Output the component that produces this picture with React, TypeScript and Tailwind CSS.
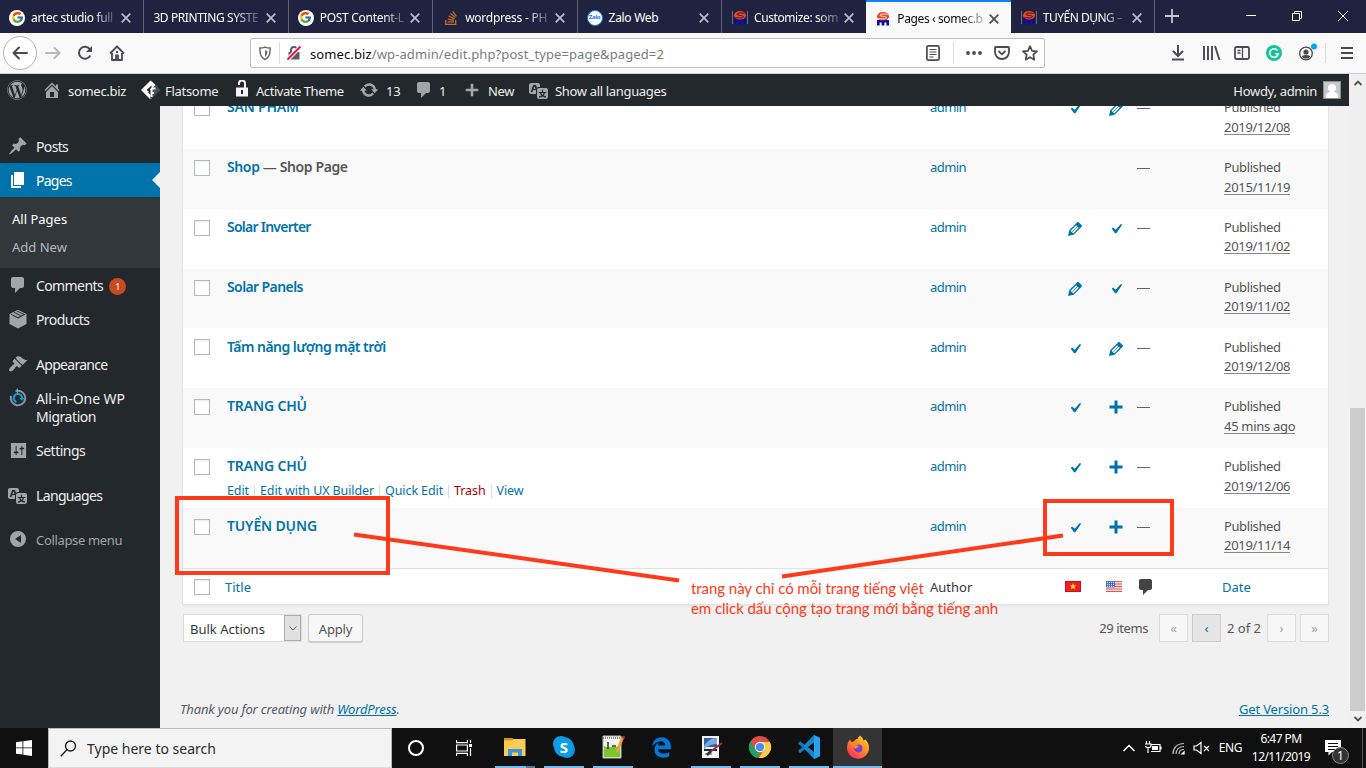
import React from "react";
import { FcGoogle } from "react-icons/fc";
import { FaWordpress, FaStackOverflow, FaEdgeLegacy } from "react-icons/fa6";

const D = {
  comment: "M5 2h9c1.1 0 2 .9 2 2v7c0 1.1-.9 2-2 2h-2l-5 5v-5H5c-1.1 0-2-.9-2-2V4c0-1.1.9-2 2-2z",
  post: "M10.44 3.02l1.82-1.82 6.36 6.35-1.83 1.82c-1.05-.68-2.48-.57-3.41.36l-.75.75c-.92.93-1.04 2.35-.35 3.41l-1.83 1.82-2.41-2.41-2.8 2.79c-.42.42-3.38 2.71-3.8 2.29s1.86-3.39 2.28-3.81l2.79-2.79L4.1 9.36l1.83-1.82c1.05.69 2.48.57 3.4-.36l.75-.75c.93-.92 1.05-2.35.36-3.41z",
  page: "M6 15V2h10v13H6zm-1 1h8v2H3V5h2v11z",
  appearance:
    "M14.48 11.06L7.41 3.99l1.5-1.5c.5-.56 2.3-.47 3.51.32 1.21.8 1.43 1.28 2.91 2.1 1.18.64 2.45 1.26 4.45.85zm-.71.71L6.7 4.7 4.93 6.47c-.39.39-.39 1.02 0 1.41l1.06 1.06c.39.39.39 1.03 0 1.42-.6.6-1.43 1.11-2.21 1.69-.35.26-.7.53-1.01.84C1.43 14.23.4 16.08 1.4 17.07c.99 1 2.84-.03 4.18-1.36.31-.31.58-.66.85-1.02.57-.78 1.08-1.61 1.69-2.21.39-.39 1.02-.39 1.41 0l1.06 1.06c.39.39 1.02.39 1.41 0z",
  settings:
    "M18 18V2H2v16h16zM8 11h1c.55 0 1 .45 1 1s-.45 1-1 1H8v1.5c0 .28-.22.5-.5.5s-.5-.22-.5-.5V13H6c-.55 0-1-.45-1-1s.45-1 1-1h1V5.5c0-.28.22-.5.5-.5s.5.22.5.5V11zm5-2h-1c-.55 0-1-.45-1-1s.45-1 1-1h1V5.5c0-.28.22-.5.5-.5s.5.22.5.5V7h1c.55 0 1 .45 1 1s-.45 1-1 1h-1v5.5c0 .28-.22.5-.5.5s-.5-.22-.5-.5V9z",
  home: "M16 8.5l1.53 1.53-1.06 1.06L10 4.6l-6.47 6.49-1.06-1.06L10 2.5l4 4v-2h2v4zm-6-2.46l6 5.99V18H4v-5.97zM12 17v-5H8v5h4z",
  update:
    "M10.2 3.28c3.53 0 6.43 2.61 6.92 6h2.08l-3.5 4-3.5-4h2.32c-.45-1.97-2.21-3.45-4.32-3.45-1.45 0-2.73.71-3.54 1.78L4.95 5.66C6.23 4.2 8.11 3.28 10.2 3.28zm-.4 13.44c-3.52 0-6.43-2.61-6.92-6H.8l3.5-4c1.17 1.33 2.33 2.67 3.5 4H5.48c.45 1.97 2.21 3.45 4.32 3.45 1.45 0 2.73-.71 3.54-1.78l1.71 1.95c-1.28 1.46-3.15 2.38-5.25 2.38z",
  plus: "M17 8.5v3h-5.5V17h-3v-5.5H3v-3h5.5V3h3v5.5z",
  translation:
    "M11 7H9.49c-.63 0-1.25.3-1.59.7L7 5H4.13l-2.39 7h1.69l.74-2H7v4H2c-1.1 0-2-.9-2-2V5c0-1.1.9-2 2-2h7c1.1 0 2 .9 2 2v2zM6.51 9H4.49l1-2.93zM10 8h7c1.1 0 2 .9 2 2v7c0 1.1-.9 2-2 2h-7c-1.1 0-2-.9-2-2v-7c0-1.1.9-2 2-2zm7.25 5v-1.08h-3.17V9.75h-1.16v2.17H9.75V13h1.28c.11.85.56 1.85 1.28 2.62-.87.36-1.89.62-2.31.62-.01.02.22.97.2 1.46.84 0 2.21-.5 3.28-1.15 1.09.65 2.48 1.15 3.34 1.15-.02-.49.2-1.44.2-1.46-.43 0-1.49-.27-2.38-.63.7-.77 1.14-1.77 1.25-2.61h1.36zm-3.81 1.93c-.5-.46-.85-1.13-1.01-1.93h2.09c-.17.8-.51 1.47-1 1.93l-.04.03s-.03-.02-.04-.03z",
  yes: "M14.83 4.89l1.34.94-5.81 8.38H9.02L5.78 9.67l1.34-1.25 2.57 2.4z",
  edit: "M13.89 3.39l2.71 2.72c.46.46.42 1.24.03 1.64l-8.01 8.02-5.56 1.16 1.16-5.58s7.6-7.63 7.99-8.03c.39-.39 1.22-.39 1.68.07zm-2.73 2.79l-5.59 5.61 1.11 1.11 5.54-5.65zm-2.97 8.23l5.58-5.6-1.07-1.08-5.59 5.6z",
  collapse: "M10 2a8 8 0 1 1 0 16 8 8 0 0 1 0-16zM13 14V6l-6 4z",
  products: "M10 .8L18.5 5v10L10 19.5 1.5 15V5zM2.6 5.6L10 9.4l7.4-3.8-.5-.8L10 8.3 3.1 4.8zM5.6 3.6l6.6 3.4.9-.5-6.6-3.4zM8.6 2.2l6.6 3.3.8-.5L9.500 1.700z",
};

function Dash({ d, className = "size-5" }: { d: string; className?: string }) {
  return (
    <svg viewBox="0 0 20 20" className={`shrink-0 ${className}`} fill="currentColor" fillRule="evenodd">
      <path d={d} />
    </svg>
  );
}

function Google() {
  return (
    <span className="grid size-4 shrink-0 place-items-center rounded-full bg-white">
      <FcGoogle className="size-[13px]" />
    </span>
  );
}

function Somec({ active }: { active?: boolean }) {
  return (
    <svg viewBox="0 0 16 16" className="size-4 shrink-0" fill="none">
      {!active && <path d="M.5 1v13M15.500 1v13" stroke="#8d8d9c" strokeWidth=".7" />}
      <path d="M2 14.500V9h12v5.500h-2.600V11.500H9.400v3H6.600v-3H4.600v3z" fill="#0b0b9c" />
      <ellipse cx="8" cy="5.300" rx="6" ry="4.300" fill="#f4431c" />
      <path d="M12.500 3.600C9.500 2.600 5 2.900 5 4.300c0 1.300 6.500.8 6.500 2.400 0 1.500-5 1.500-8 .8" stroke={active ? "#f9f9fa" : "#202340"} strokeWidth="1" />
    </svg>
  );
}

const tabs = [
  { icon: <Google />, text: "artec studio full", pad: "pl-[9px]", track: "tracking-[-0.35px]" },
  { icon: null, text: "3D PRINTING SYSTE", pad: "pl-[9px]", track: "tracking-[-0.4px]" },
  { icon: <Google />, text: "POST Content-L", pad: "pl-[9px]", track: "tracking-[-0.3px]" },
  { icon: <FaStackOverflow className="size-4 shrink-0 text-[#c96a2c]" />, text: "wordpress - PH", pad: "pl-[10px]", track: "tracking-[-0.25px]" },
  {
    icon: (
      <span className="grid size-4 shrink-0 place-items-center rounded-full border border-[#1477f8] bg-white text-[6px] font-bold tracking-[-0.3px] text-[#1477f8]">Zalo</span>
    ),
    text: "Zalo Web",
    pad: "pl-[9px]",
    track: "tracking-[-0.3px]",
  },
  { icon: <Somec />, text: "Customize: som", pad: "pl-[10px]", track: "tracking-[-0.4px]" },
  { icon: <Somec active />, text: "Pages ‹ somec.b", pad: "pl-[9px]", track: "tracking-[-0.4px]", active: true },
  { icon: <Somec />, text: "TUYỂN DỤNG –", pad: "pl-[10px]", track: "tracking-[-0.5px]" },
];

function TabBar() {
  return (
    <div className="flex h-[33px] shrink-0 bg-[#202340] text-white">
      {tabs.map((t, i) => (
        <div
          key={i}
          className={`flex h-[33px] w-[144.4px] shrink-0 items-center ${t.pad} pt-[2px] text-[12px] ${
            t.active ? "border-t-2 border-[#0a84ff] bg-[#f9f9fa] pt-0 text-[#0c0c0d]" : i === 5 ? "" : "border-r border-[#62647a]"
          }`}
        >
          {t.icon}
          <span
            className={`${t.icon ? "ml-[6px]" : ""} whitespace-nowrap ${
              i === 4 ? "" : "[mask-image:linear-gradient(to_right,black_75%,rgba(0,0,0,0.25)_100%)]"
            } ${t.track}`}
          >
            {t.text}
          </span>
          <svg viewBox="0 0 10 10" className="ml-auto mr-[12px] size-[10px] shrink-0" stroke={t.active ? "#4a4a4f" : "#bcbdc8"} strokeWidth="1.7">
            <path d="M.7.7l8.600 8.600M9.300.7L.7 9.300" />
          </svg>
        </div>
      ))}
      <svg viewBox="0 0 14 14" className="ml-[10px] mt-[9px] size-[14px]" stroke="#c5c6d0" strokeWidth="1.8">
        <path d="M7 0v14M0 7h14" />
      </svg>
      <svg viewBox="0 0 120 12" className="ml-auto mr-[7px] mt-[10px] h-3 w-[120px]" fill="none" stroke="#fff">
        <path d="M7 5.500h10M53.500 3.500h7v7h-7zM55.500 3.500v-2h7v7h-2M99 1l10 10M109 1L99 11" />
      </svg>
    </div>
  );
}

function Toolbar() {
  return (
    <div className="flex h-[41px] shrink-0 items-center border-b border-[#cfcfd1] bg-[#f9f9fa] text-[#4a4a4f]">
      <span className="ml-[3px] grid size-[34px] place-items-center rounded-full border border-[#b5b5b7] bg-white">
        <svg viewBox="0 0 16 16" className="size-4" fill="none" stroke="currentColor" strokeWidth="2" strokeLinecap="round" strokeLinejoin="round">
          <path d="M15 8H1.500M7 2.500L1.500 8 7 13.500" />
        </svg>
      </span>
      <svg viewBox="0 0 16 16" className="ml-2 size-4" fill="none" stroke="#b9b9bb" strokeWidth="2" strokeLinecap="round" strokeLinejoin="round">
        <path d="M1 8h13.500M9.500 3l5 5-5 5" />
      </svg>
      <svg viewBox="0 0 16 16" className="ml-4 size-4" fill="none" stroke="currentColor" strokeWidth="2">
        <path d="M13.300 10.500A6 6 0 1 1 13 4.500" />
        <path d="M15 1v6H9z" fill="currentColor" stroke="none" />
      </svg>
      <svg viewBox="0 0 16 16" className="ml-4 size-4" fill="none" stroke="currentColor" strokeWidth="1.8" strokeLinejoin="round">
        <path d="M1 8.500L8 1.500l7 7M3 8v7h10V8" />
        <path d="M7 15v-4.500h2V15M7 7h2" />
      </svg>
      <div className="ml-[125px] flex h-[30px] w-[795px] items-center rounded-[2px] border border-[#bebec0] bg-white">
        <svg viewBox="0 0 14 16" className="ml-[7px] h-[15px] w-[14px]" fill="none" stroke="#6a6a6e" strokeWidth="1.600">
          <path d="M7 1.200c2 .8 4 1 5.500 1C12.500 8 12 12 7 14.500 2 12 1.500 8 1.500 2.200c1.500 0 3.500-.2 5.500-1z" />
          <path d="M7 4.500v7c2-1.500 2.500-3.500 2.500-6.200z" fill="#6a6a6e" stroke="none" />
        </svg>
        <span className="ml-[7px] h-[22px] w-px bg-[#dcdcdd]" />
        <svg viewBox="0 0 16 16" className="ml-[6px] size-[16px]" fill="none">
          <path d="M5 8V5a3 3 0 0 1 6 0v3" stroke="#5c5c60" strokeWidth="2" />
          <path d="M2.500 7h11v7.500h-11z" fill="#5c5c60" />
          <path d="M1.500 14.500l13-13" stroke="#fff" strokeWidth="4" />
          <path d="M1.500 14.500l13-13" stroke="#ff0039" strokeWidth="1.800" />
        </svg>
        <span className="ml-[8px] mt-[4px] whitespace-nowrap text-[13px] tracking-[0.11px] text-[#0c0c0d]">
          somec.biz<span className="text-[#7b7b7e]">/wp-admin/edit.php?post_type=page&amp;paged=2</span>
        </span>
        <svg viewBox="0 0 14 16" className="ml-auto h-4 w-[14px]" fill="none" stroke="#4a4a4f" strokeWidth="1.700">
          <rect x=".9" y=".9" width="12.200" height="14.200" rx="1.500" />
          <path d="M3.500 4.500h7M3.500 7h7M3.500 9.500h7M3.500 12h4" strokeWidth="1" />
        </svg>
        <span className="ml-[13px] h-[22px] w-px bg-[#dcdcdd]" />
        <svg viewBox="0 0 16 4" className="ml-[12px] h-1 w-4" fill="#4a4a4f">
          <circle cx="2" cy="2" r="1.900" /><circle cx="8" cy="2" r="1.900" /><circle cx="14" cy="2" r="1.900" />
        </svg>
        <svg viewBox="0 0 16 14" className="ml-3 h-[14px] w-4" fill="none" stroke="#4a4a4f" strokeWidth="1.800">
          <path d="M1.800 1h12.400c.5 0 .8.300.8.800V6c0 4-3 7-7 7S1 10 1 6V1.800c0-.5.300-.8.800-.8z" />
          <path d="M4.500 5L8 8.300 11.500 5" />
        </svg>
        <svg viewBox="0 0 16 16" className="ml-3 mr-[6px] size-4" fill="none" stroke="#4a4a4f" strokeWidth="1.700" strokeLinejoin="round">
          <path d="M8 1.200l2 4.600 5 .5-3.700 3.400 1 5L8 12.200l-4.300 2.500 1-5L1 6.300l5-.5z" />
        </svg>
      </div>
      <svg viewBox="0 0 196 20" className="ml-auto mr-[1px] h-5 w-[196px]" fill="none" stroke="#4a4a4f" strokeWidth="2">
        <path d="M9 2v10M4 8l5 5 5-5M3 16.500h12" />
        <path d="M35 3v14M39 3v14M43 3v14M46 3l4.500 14" strokeWidth="1.900" />
        <rect x="66" y="4" width="14" height="12" rx="1.500" strokeWidth="1.800" />
        <path d="M73.500 4v12M68.500 7.500h3M68.500 10h3" strokeWidth="1.300" />
        <circle cx="105" cy="10" r="8" fill="#15c39a" stroke="none" />
        <path d="M108.500 7.500A4.300 4.300 0 1 0 109.300 10.700h-3" stroke="#fff" strokeWidth="1.600" />
        <circle cx="137" cy="10.500" r="6.300" strokeWidth="1.300" />
        <circle cx="137" cy="9" r="2.600" fill="#4a4a4f" stroke="none" />
        <path d="M132.800 13.500c1-2 7.400-2 8.400 0-2 3-6.400 3-8.400 0z" fill="#4a4a4f" stroke="none" />
        <circle cx="145" cy="3.500" r="3" fill="#00a8f8" stroke="none" />
        <path d="M156.500 0v20" stroke="#dcdcdd" strokeWidth="1" />
        <path d="M172 5h12M172 10h12M172 15h12" strokeWidth="1.900" />
      </svg>
    </div>
  );
}

function AdminBar() {
  return (
    <div className="flex h-8 shrink-0 items-center overflow-hidden whitespace-nowrap bg-[#23282d] pt-[3px] text-[13px] tracking-[-0.3px] text-[#eee]">
      <FaWordpress className="-mt-[3px] ml-[7px] size-5 text-[#a0a5aa]" />
      <Dash d={D.home} className="-mt-[3px] ml-[15px] size-5 text-[#a0a5aa]" />
      <span className="ml-[6px] w-[73px]">somec.biz</span>
      <svg viewBox="0 0 20 20" className="-mt-[4px] size-5" fill="none">
        <path d="M10.500.5L19.500 10l-9.500 9.500V10z" fill="#4b4f53" />
        <path d="M9.500.5L0 10l9.500 9.500V15L7 12.500 13 6.500 14.500 5z" fill="#fff" />
        <path d="M10.500 12.500V8.500h4M10.500 17v-4h2.500" stroke="#fff" strokeWidth="2" />
        <path d="M5.500 10l5-4.500v2L9 9.200v3.300z" fill="#23282d" />
      </svg>
      <span className="ml-[4px] w-[69px]">Flatsome</span>
      <svg viewBox="0 0 14 17" className="-mt-[6px] ml-[1px] h-[17px] w-[14px]" fill="none">
        <path d="M4 5V3.500a3 3 0 0 1 6 0V8" stroke="#f4f4f4" strokeWidth="2" />
        <path d="M1 7.500h12V16.500H1z" fill="#f4f4f4" />
        <path d="M7 10v4" stroke="#23282d" strokeWidth="2" />
      </svg>
      <span className="ml-[7px] w-[89px] tracking-[-0.45px]">Activate Theme</span>
      <Dash d={D.update} className="-mt-[3px] ml-[14px] size-5 text-[#a0a5aa]" />
      <span className="ml-[7px] w-[14px]">13</span>
      <Dash d={D.comment} className="-mt-[3px] ml-[14px] size-5 text-[#a0a5aa]" />
      <span className="ml-[5px] w-[8px]">1</span>
      <Dash d={D.plus} className="-mt-[3px] ml-[16px] size-[18px] text-[#a0a5aa]" />
      <span className="ml-[7px] w-[27px]">New</span>
      <Dash d={D.translation} className="-mt-[3px] ml-[14px] size-5 text-[#a0a5aa]" />
      <span className="ml-[6px] tracking-[-0.33px]">Show all languages</span>
      <span className="ml-auto mr-[6px]">Howdy, admin</span>
      <svg viewBox="0 0 18 18" className="-mt-[3px] mr-[8px] size-[18px]">
        <path d="M0 0h18v18H0z" fill="#8c8f94" />
        <path d="M1 1h16v16H1z" fill="#c5c7c9" />
        <circle cx="9" cy="7" r="4" fill="#fff" />
        <path d="M3 17c0-6 3-6 6-6s6 0 6 6z" fill="#fff" />
      </svg>
    </div>
  );
}

function MenuItem({ icon, children, h = "h-[34px]", track = "tracking-[-0.5px]" }: { icon: React.ReactNode; children: React.ReactNode; h?: string; track?: string }) {
  return (
    <div className={`flex ${h} items-start text-[14px] leading-[18px] text-[#eee]`}>
      <span className="ml-2 mt-[7px] grid size-5 shrink-0 place-items-center text-[#a0a5aa]">{icon}</span>
      <span className={`ml-2 mt-[9px] whitespace-nowrap ${track}`}>{children}</span>
    </div>
  );
}

function Sidebar() {
  return (
    <div className="flex w-[160px] shrink-0 flex-col bg-[#23282d] pt-[23px]">
      <MenuItem icon={<Dash d={D.post} />} track="tracking-[-0.65px]">Posts</MenuItem>
      <div className="relative flex h-[34px] items-center bg-[#0073aa] text-[14px] text-white">
        <Dash d={D.page} className="ml-2 size-5" />
        <span className="ml-2 tracking-[-0.75px]">Pages</span>
        <svg viewBox="0 0 8 16" className="absolute right-0 top-[9px] h-4 w-2" fill="#f1f1f1">
          <path d="M8 0v16L0 8z" />
        </svg>
      </div>
      <div className="flex h-[71px] flex-col bg-[#32373c] pl-3 pt-[12px] text-[13px] leading-[20px]">
        <span className="h-7 text-white">All Pages</span>
        <span className="text-[#b4b9be]">Add New</span>
      </div>
      <MenuItem icon={<Dash d={D.comment} />} track="tracking-[-0.6px]">
        Comments
        <span className="ml-[6px] inline-grid size-[17px] place-items-center rounded-full bg-[#ca4a1f] align-[1px] text-[9px] leading-none text-white">1</span>
      </MenuItem>
      <MenuItem icon={<Dash d={D.products} />} h="h-[45px]" track="tracking-[-0.6px]">Products</MenuItem>
      <MenuItem icon={<Dash d={D.appearance} />} track="tracking-[-0.7px]">Appearance</MenuItem>
      <MenuItem
        h="h-[52px]"
        track="tracking-[-0.1px]"
        icon={
          <svg viewBox="0 0 20 20" className="size-5" fill="none">
            <path d="M3 8a7.300 7.300 0 1 0 7-5.300" stroke="#8f9499" strokeWidth="2" />
            <path d="M10 0v5.500L7 3z" fill="#8f9499" />
            <path d="M14 11a4.200 4.200 0 1 0-5.500 3" stroke="#0f9ade" strokeWidth="2.200" />
            <path d="M16.500 10h-5l2.500 3z" fill="#0f9ade" />
          </svg>
        }
      >
        All-in-One WP
        <br />
        <span className="tracking-[-0.45px]">Migration</span>
      </MenuItem>
      <MenuItem icon={<Dash d={D.settings} className="size-[19px]" />} h="h-[45px]">Settings</MenuItem>
      <MenuItem icon={<Dash d={D.translation} />} h="h-[45px]" track="tracking-[-0.65px]">Languages</MenuItem>
      <div className="flex items-center text-[13px] text-[#a0a5aa]">
        <Dash d={D.collapse} className="ml-2 mt-[5px] size-5" />
        <span className="ml-2 mt-[8px] tracking-[-0.33px]">Collapse menu</span>
      </div>
    </div>
  );
}

const Check = () => <Dash d={D.yes} className="size-5" />;
const Pencil = () => <Dash d={D.edit} className="size-5" />;
const Plus = () => <Dash d="M3.500 8.500h5V3.500h3v5h5v3h-5v5h-3v-5h-5z" className="-mt-[2px] size-5" />;

type Row = {
  title: string;
  suffix?: string;
  track: string;
  h: string;
  vi?: React.ReactNode;
  en?: React.ReactNode;
  date: string;
  actions?: boolean;
  tall?: boolean;
  drop?: boolean;
  bg: string;
};
const rows: Row[] = [
  { title: "SẢN PHẨM", track: "tracking-[-0.2px]", h: "h-[60px]", vi: <Check />, en: <Pencil />, date: "2019/12/08", tall: true, bg: "bg-white" },
  { title: "Shop", suffix: " — Shop Page", track: "tracking-[-0.38px]", h: "h-[60px]", date: "2015/11/19", tall: true, bg: "bg-[#f9f9f9]" },
  { title: "Solar Inverter", track: "tracking-[-0.75px]", h: "h-[60px]", vi: <Pencil />, en: <Check />, date: "2019/11/02", bg: "bg-white" },
  { title: "Solar Panels", track: "tracking-[-0.6px]", h: "h-[59px]", vi: <Pencil />, en: <Check />, date: "2019/11/02", bg: "bg-[#f9f9f9]" },
  { title: "Tấm năng lượng mặt trời", track: "tracking-[-0.53px]", h: "h-[60px]", vi: <Check />, en: <Pencil />, date: "2019/12/08", bg: "bg-white", drop: true },
  { title: "TRANG CHỦ", track: "tracking-[-0.15px]", h: "h-[60px]", vi: <Check />, en: <Plus />, date: "45 mins ago", tall: true, bg: "bg-[#f9f9f9]" },
  { title: "TRANG CHỦ", track: "tracking-[-0.15px]", h: "h-[60px]", vi: <Check />, en: <Plus />, date: "2019/12/06", tall: true, bg: "bg-white", actions: true },
  { title: "TUYỂN DỤNG", track: "tracking-[-0.15px]", h: "h-[60px]", vi: <Check />, en: <Plus />, date: "2019/11/14", bg: "bg-[#f9f9f9]" },
];

const Box = () => <span className="size-4 shrink-0 border border-[#b4b9be] bg-white shadow-[inset_0_1px_2px_rgba(0,0,0,.08)]" />;
const Sep = () => <span className="mx-[5px] h-[13px] w-px bg-[#ddd]" />;

function TableRow({ r }: { r: Row }) {
  return (
    <div className={`flex ${r.h} shrink-0 ${r.bg} ${r.drop ? "pt-px" : ""} whitespace-nowrap text-[13px] leading-[20px] tracking-[-0.4px] text-[#555]`}>
      <div className={`w-[44px] pl-[11px] ${r.drop ? "pt-[10px]" : "pt-[11px]"}`}>
        <div className="flex"><Box /></div>
      </div>
      <div className="w-[703px] pt-[8px]">
        <div className={`text-[14px] font-semibold ${r.track}`}>
          <span className="text-[#0073aa]">{r.title}</span>
          {r.suffix}
        </div>
        {r.actions && (
          <div className="mt-[6px] flex h-[18px] items-center text-[12.500px] tracking-[-0.1px] text-[#0073aa]">
            Edit<Sep />Edit with UX Builder<Sep />Quick Edit<Sep /><span className="text-[#a00]">Trash</span><Sep />View
          </div>
        )}
      </div>
      <div className="w-[135px] pt-[8px] tracking-[-0.55px] text-[#0073aa]">admin</div>
      <div className="flex h-5 w-[41px] items-center pt-[19px] text-[#0073aa]">{r.vi}</div>
      <div className="flex h-5 w-[31px] items-center pt-[19px] text-[#0073aa]">{r.en}</div>
      <div className="w-[87px] pt-[19px]"><div className="h-px w-[13px] bg-[#666]" /></div>
      <div className="pt-[8px]">
        <div className={r.tall ? "h-5" : "h-[19px]"}>Published</div>
        <span className="block h-[18px] border-b border-[#888] tracking-[-0.3px]">{r.date}</span>
      </div>
    </div>
  );
}

function PageBtn({ children, active }: { children: string; active?: boolean }) {
  return (
    <span className={`grid h-[28px] w-[29px] place-items-center border text-[13px] leading-none ${active ? "border-[#ccc] bg-[#e5e5e5] text-[#0073aa]" : "border-[#ddd] bg-[#f7f7f7] text-[#a0a5aa]"}`}>
      {children}
    </span>
  );
}

function Content() {
  return (
    <div className="flex min-w-0 grow flex-col overflow-hidden bg-[#f1f1f1] pl-[22px] pr-[20px]">
      <div className="-mt-[17px] flex flex-col border border-t-0 border-[#e5e5e5] bg-white shadow-[0_1px_1px_rgba(0,0,0,.04)]">
        {rows.map((r, i) => <TableRow key={i} r={r} />)}
        <div className="flex h-[36px] items-center border-t border-[#e1e1e1] pt-px text-[13px] text-[#32373c]">
          <span className="-mt-px flex w-[42px] pl-[11px]"><Box /></span>
          <span className="mt-px w-[705px] text-[#0073aa]">Title</span>
          <span className="mt-px w-[135px]">Author</span>
          <svg viewBox="0 0 16 11" className="-mt-px h-[11px] w-4">
            <path d="M0 0h16v11H0z" fill="#c8101c" /><path d="M1 1h14v9H1z" fill="#ee1c24" />
            <path d="M8 2l.9 2.400h2.500l-2 1.500.8 2.500L8 7l-2.200 1.400.8-2.500-2-1.500h2.500z" fill="#ffe81a" />
          </svg>
          <svg viewBox="0 0 16 11" className="-mt-px ml-[25px] h-[11px] w-4">
            <path d="M0 0h16v11H0z" fill="#f5e3e3" /><path d="M0 .5h16M0 3h16M0 5.500h16M0 8h16M0 10.500h16" stroke="#e2574c" />
            <path d="M0 0h9v6.500H0z" fill="#4a72d4" />
            <path d="M1 1.500h8M1 3.500h8M1 5.500h8" stroke="#dbe6fb" strokeDasharray="1 1" />
          </svg>
          <Dash d={D.comment} className="ml-[14px] size-5 text-[#444]" />
          <span className="ml-[66px] mt-px text-[#0073aa]">Date</span>
        </div>
      </div>
      <div className="mt-[9px] flex h-[28px] items-center whitespace-nowrap text-[13px] text-[#555]">
        <span className="ml-px flex h-[28px] w-[119px] items-center justify-between border border-[#ddd] bg-white pl-[6px] text-[#32373c]">
          <span className="mt-[4px]">Bulk Actions</span>
          <span className="grid h-[26px] w-[17px] place-items-center border border-[#adadad] bg-[#e1e1e1]">
            <svg viewBox="0 0 8 5" className="h-[5px] w-2" fill="none" stroke="#555"><path d="M.5.5L4 4 7.500.5" /></svg>
          </span>
        </span>
        <span className="ml-[6px] grid h-[28px] w-[55px] place-items-center rounded-[3px] border border-[#ccc] bg-[#f7f7f7] pt-[4px] tracking-[-0.2px] shadow-[0_1px_0_#ccc]">Apply</span>
        <span className="ml-auto mt-[2px] tracking-[-0.4px]">29 items</span>
        <span className="ml-[11px]"><PageBtn>«</PageBtn></span>
        <span className="ml-[4px]"><PageBtn active>‹</PageBtn></span>
        <span className="mx-[6px] mt-[2px]">2 of 2</span>
        <PageBtn>›</PageBtn>
        <span className="ml-[4px]"><PageBtn>»</PageBtn></span>
      </div>
      <div className="-ml-[2px] mt-auto flex h-[28px] justify-between text-[13px] text-[#555d66]">
        <span className="italic tracking-[-0.16px]">Thank you for creating with <span className="text-[#0073aa] underline">WordPress</span>.</span>
        <span className="tracking-[-0.15px] text-[#0073aa] underline">Get Version 5.3</span>
      </div>
    </div>
  );
}

function Scrollbar() {
  return (
    <div className="flex w-[17px] shrink-0 flex-col items-center bg-[#f0f0f0]">
      <svg viewBox="0 0 8 6" className="mt-[6px] h-[6px] w-2" fill="none" stroke="#505050" strokeWidth="1.800"><path d="M.5 5L4 1.500 7.500 5" /></svg>
      <div className="mt-auto h-[303px] w-[15px] bg-[#cdcdcd]" />
      <svg viewBox="0 0 8 6" className="mb-[6px] mt-[5px] h-[6px] w-2" fill="none" stroke="#505050" strokeWidth="1.800"><path d="M.5 1L4 4.500 7.500 1" /></svg>
    </div>
  );
}

function Notes() {
  return (
    <>
      <svg viewBox="0 0 1366 768" className="pointer-events-none absolute inset-0 h-[768px] w-[1366px]" fill="none" stroke="#ff3a1a" strokeWidth="4">
        <rect x="177" y="498" width="211" height="75" />
        <rect x="1045" y="501" width="127" height="53" />
        <path d="M354 534.500L679 580.500M782 576.500L1063 535.500" />
      </svg>
      <div className="absolute left-[691px] top-[578px] whitespace-nowrap font-[Lato,'Noto_Sans',sans-serif] text-[15px] leading-[20px] tracking-[-0.06px] text-[#ff3a1a]">
        trang này chỉ có mỗi trang tiếng việt
        <br />
        em click dấu cộng tạo trang mới bằng tiếng anh
      </div>
    </>
  );
}

const apps: { icon: React.ReactNode; line?: boolean; active?: boolean }[] = [
  {
    line: true,
    icon: (
      <svg viewBox="0 0 24 24" className="size-6">
        <path d="M1 3h8l1 1h12.500v17H1z" fill="#f9cd55" /><path d="M1 3h8l1 2.500H1z" fill="#d9960e" />
        <path d="M5 14h14v7h-4v-3.500H9V21H5z" fill="#3a96dd" />
      </svg>
    ),
  },
  {
    line: true,
    icon: (
      <svg viewBox="0 0 24 24" className="size-6">
        <circle cx="9" cy="9" r="8" fill="#0b9ee6" /><circle cx="15" cy="15" r="8" fill="#0b8fdc" /><circle cx="12" cy="12" r="10" fill="#0b9ee6" />
        <text x="12" y="17.500" textAnchor="middle" fontSize="15" fontWeight="700" fill="#fff" fontFamily="Open Sans">S</text>
      </svg>
    ),
  },
  {
    line: true,
    icon: (
      <svg viewBox="0 0 24 24" className="size-6">
        <path d="M2 1h18v22H2z" fill="#f3f3ee" stroke="#b8b8b0" /><path d="M3 11c5 3 11 0 16 1v10H3z" fill="#7ac62b" />
        <path d="M2 3h18" stroke="#888" strokeWidth="2" strokeDasharray="1 1" /><path d="M7 7v7M11 11h4" stroke="#333" strokeWidth="1.500" />
        <path d="M22 2l-6.500 15" stroke="#e8a33a" strokeWidth="2.800" /><path d="M23 1l-1 2.500" stroke="#a33" strokeWidth="2.500" />
      </svg>
    ),
  },
  { icon: <FaEdgeLegacy className="size-[21px] text-[#0078d7]" /> },
  {
    line: true,
    icon: (
      <svg viewBox="0 0 24 24" className="size-6">
        <path d="M3 1h17v22H3z" fill="#f2f2f2" /><path d="M5 3h13v9H5z" fill="#2d62b0" /><path d="M5 11c3-5 7-8 13-8v6c-4 0-8 1-13 5z" fill="#7fa9dc" />
        <path d="M5 14h13v2H5z" fill="#14284c" /><path d="M6 19h7" stroke="#555" /><path d="M23 8L11 17" stroke="#b3282d" strokeWidth="1.800" /><path d="M12 16l-4 4" stroke="#333" strokeWidth="2.500" />
      </svg>
    ),
  },
  {
    line: true,
    icon: (
      <svg viewBox="0 0 24 24" className="size-6">
        <circle cx="12" cy="12" r="11" fill="#dd4f43" />
        <path d="M2.500 6.500L7.500 15 12 17l-2.500 6A11 11 0 0 1 2.500 6.500z" fill="#1ca362" />
        <path d="M12 7h9.800A11 11 0 0 1 10.800 23L16.500 14z" fill="#ffce44" />
        <circle cx="12" cy="12" r="5.200" fill="#f5f5f5" /><circle cx="12" cy="12" r="4.100" fill="#4a8af4" />
      </svg>
    ),
  },
  {
    line: true,
    icon: (
      <svg viewBox="0 0 24 24" className="size-6" fill="none">
        <path d="M17.500 4.500L2 17M2 7.500l15.500 12" stroke="#0a7cc4" strokeWidth="3" />
        <path d="M17 0l6 2.700v18.600L17 24z" fill="#26a3f0" />
        <path d="M17 0v8.500L11.500 12 17 16.500V24l-10-10.500 1.500-1.700L7 10.300z" fill="#1587d0" />
        <path d="M17 7.500v9.500L11 12z" fill="#101010" />
      </svg>
    ),
  },
  {
    line: true,
    active: true,
    icon: (
      <svg viewBox="0 0 24 24" className="size-6">
        <defs>
          <linearGradient id="fx" x1="1" y1="0" x2=".2" y2="1"><stop offset="0" stopColor="#ffdf3a" /><stop offset=".45" stopColor="#ff9320" /><stop offset="1" stopColor="#ff2a5f" /></linearGradient>
        </defs>
        <path d="M14 .5c2 1.500 3 3 3.500 5l2-1c2 2 3.500 5 3.500 8A11 11 0 0 1 1 13C1 9 2.500 6 4 4.500L5.500 7l2.500-.5c1-2 2.500-2.500 3.500-2.500.500-1.500 1.500-2.500 2.500-3.500z" fill="url(#fx)" />
        <path d="M8 11c2 0 3.500-2 6-1.500 3 1 3.500 5.500.5 7.500-3.500 1.500-7.500-1-6.500-6z" fill="#7b3fd8" />
        <path d="M3 8.500c2-1.500 5-.5 6.500 1.500L13 11l-3 2.500C7 13 8 11 3 8.500z" fill="#ff8a1f" />
      </svg>
    ),
  },
];

function Taskbar() {
  return (
    <div className="flex h-10 shrink-0 bg-[#101010] text-white">
      <span className="grid w-12 place-items-center">
        <svg viewBox="0 0 16 16" className="size-4" fill="#fff"><path d="M0 2.200L6.500 1.300v6.200H0zM7.300 1.200L16 0v7.500H7.300zM0 8.300h6.500v6.300L0 13.700zM7.300 8.300H16V16l-8.700-1.200z" /></svg>
      </span>
      <span className="flex w-[344px] items-center border border-[#b8b8b8] border-b-[#ddd] bg-[#f3f3f3] text-[#2b2b2b]">
        <svg viewBox="0 0 17 17" className="ml-[11px] size-[17px]" fill="none" stroke="#222" strokeWidth="1.400"><circle cx="10.500" cy="6" r="5" /><path d="M7 9.800L.7 16.300" /></svg>
        <span className="ml-[10px] text-[14px]">Type here to search</span>
      </span>
      <span className="grid w-12 place-items-center">
        <span className="size-[16px] rounded-full border-[2.500px] border-white" />
      </span>
      <span className="grid w-[50px] place-items-center">
        <svg viewBox="0 0 16 16" className="mr-[2px] size-4" fill="none" stroke="#fff" strokeWidth="1.200"><path d="M.6 0v2.600h10.800V0M.6 5h10.800v6H.6zM.6 16v-2.600h10.800V16M14.500 0v3M14.500 8v8" /><path d="M13 4h3v3h-3z" fill="#fff" stroke="none" /></svg>
      </span>
      {apps.map((a, i) => (
        <span key={i} className={`flex w-[49px] flex-col items-center ${a.active ? "bg-[#343434]" : ""}`}>
          <span className="grid h-[38px] place-items-center">{a.icon}</span>
          {a.line && (
            <span className={`flex h-[2px] justify-end bg-[#76b9ed] ${a.active ? "w-full" : "w-10"}`}>
              {i === 0 && <span className="h-[2px] w-[9px] bg-[#54799a]" />}
            </span>
          )}
        </span>
      ))}
      <svg viewBox="0 0 90 16" className="ml-auto mt-[12px] h-4 w-[90px]" fill="none" stroke="#fff" strokeWidth="1.200">
        <path d="M1.500 11L7 5.500l5.500 5.500" strokeWidth="1.500" />
        <path d="M28.500 4.500H38v7h-9M39 6.500v3M24.500 1v3M27.500 1v3M23 4h6v2c0 2-5.500 2-5.500 0M26 8v5" />
        <path d="M30 6h6v4h-6z" fill="#fff" stroke="none" />
        <path d="M51 14C51 8 55 3.500 62 3.500M54 14c0-4.500 3-7.500 8-7.500M57 14c0-3 2-4.500 5-4.500" stroke="#bbb" />
        <path d="M60 14l2-2v2z" fill="#fff" />
        <path d="M72 6h2.500L79 2.500v11L74.500 10H72zM82 6l5 5M87 6l-5 5" />
      </svg>
      <span className="ml-[7px] self-center text-[12px] tracking-[-0.4px]">ENG</span>
      <span className="ml-[10px] flex w-[58px] flex-col items-center whitespace-nowrap pt-[2px] text-[12px] leading-[18px] tracking-[-0.55px]">
        <span>6:47 PM</span><span>12/11/2019</span>
      </span>
      <svg viewBox="0 0 26 26" className="ml-[14px] mr-[12px] mt-[10px] size-[26px] shrink-0">
        <path d="M1 2h16v12H8l-3.500 3.500V14H1z" fill="#fff" /><path d="M4 5.500h10M4 8.500h10M4 11.500h7" stroke="#101010" />
        <circle cx="16.500" cy="17.500" r="8" fill="#333" stroke="#888" />
        <text x="16.500" y="22" textAnchor="middle" fontSize="12" fill="#fff" fontFamily="Noto Sans">1</text>
      </svg>
      <span className="mr-[3px] h-10 w-px bg-[#555]" />
    </div>
  );
}

export default function App() {
  return (
    <div className="relative flex h-[768px] w-[1366px] flex-col overflow-hidden font-['Noto_Sans','Open_Sans',sans-serif]">
      <TabBar />
      <Toolbar />
      <div className="flex min-h-0 grow">
        <div className="flex min-w-0 grow flex-col">
          <AdminBar />
          <div className="flex min-h-0 grow">
            <Sidebar />
            <Content />
          </div>
        </div>
        <Scrollbar />
      </div>
      <Taskbar />
      <Notes />
    </div>
  );
}
